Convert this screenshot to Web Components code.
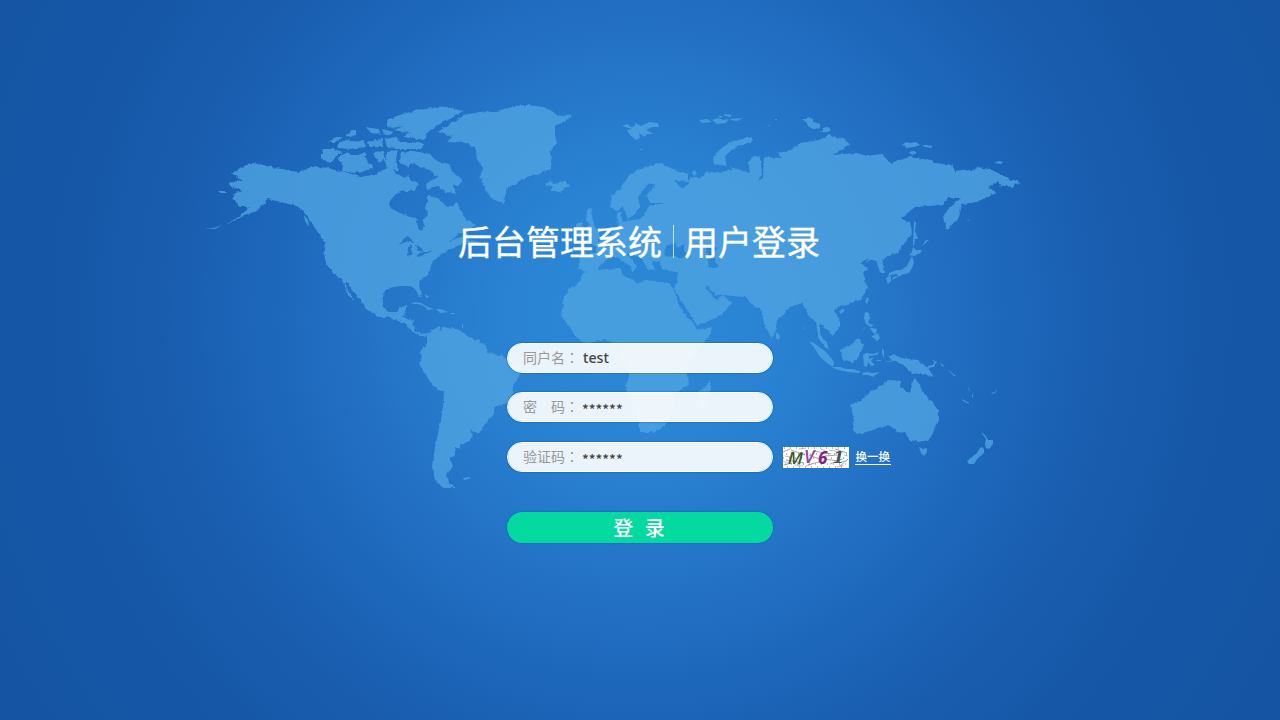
<!DOCTYPE html>
<html lang="zh-CN">
<head>
<meta charset="utf-8">
<title>后台管理系统 - 用户登录</title>
<style>
html,body{margin:0;height:100%;overflow:hidden}
body{font-family:"Noto Sans CJK SC",sans-serif}
</style>
</head>
<body>
<login-page></login-page>
<script>
function define(name, html){
  customElements.define(name, class extends HTMLElement{
    constructor(){
      super();
      const root=this.attachShadow({mode:'open'});
      const t=document.createElement('template');
      t.innerHTML=html;
      root.append(t.content.cloneNode(true));
    }
  });
}

define('world-map', `
<style>:host{display:block;width:1280px;height:720px}svg{display:block}path{fill:rgb(79,164,226)}</style>
<svg width="1280" height="720" viewBox="0 0 1280 720" aria-hidden="true">
<defs><filter id="coast" filterUnits="userSpaceOnUse" x="190" y="90" width="850" height="420" color-interpolation-filters="sRGB">
<feTurbulence type="fractalNoise" baseFrequency=".22" numOctaves="3" seed="4" result="n"/>
<feDisplacementMap in="SourceGraphic" in2="n" scale="3.8" xChannelSelector="R" yChannelSelector="G"/></filter></defs>
<g opacity=".8">
<g filter="url(#coast)">
<!-- North America -->
<path fill-rule="evenodd" d="M253 163L262 165 275 168 290 170 299 172 305 169 316 166 320 168 326 167 334 170 345 172 360 177 372 175 380 172 387 168 397 173 403 178 408 176 413 183 417 189 410 191 400 191 395 195 389 202 390 208 400 213 410 217 416 218 418 227 422 230 424 227 423 220 428 215 425 207 429 195 438 198 447 207 452 207 457 203 462 212 467 220 476 225 467 231 457 235 448 242 457 238 468 233 466 239 480 242 470 247 465 243 457 246 447 250 442 253 437 258 432 263 430 270 428 275 420 280 419 286 422 295 419 296 415 288 410 286 400 286 393 287 385 290 383 297 383 305 388 312 397 312 400 307 407 306 403 317 413 320 414 330 420 334 428 333 426 337 418 335 410 330 405 323 395 320 390 317 380 317 367 310 363 303 353 292 347 282 345 282 348 290 356 302 350 297 342 280 333 273 326 263 324 253 325 242 320 235 310 221 307 215 300 208 293 205 285 203 273 200 267 199 262 207 253 212 240 218 225 225 240 216 250 207 240 207 232 198 235 193 243 191 228 185 233 182 242 180 231 173 240 168 247 164Z
M398 243L408 236 414 243 407 242ZM408 246L412 245 411 255 407 256ZM415 245L422 247 422 252 417 250ZM416 255L424 252 432 250 428 253 419 257Z"/>
<!-- Arctic archipelago -->
<path d="M463 111L447 107 423 109 402 114 387 120 387 125 392 128 404 126 394 130 410 133 403 137 425 140 428 132 437 125 452 118Z"/>
<path d="M392 140L400 142 412 142 424 144 423 149 395 149ZM401 153L413 151 430 154 436 161 448 164 453 172 463 180 459 186 453 184 457 194 447 192 437 186 427 189 426 184 438 177 430 170 420 167 412 163 408 168 400 162Z"/>
<path d="M323 149L333 149 343 152 335 157 330 163 321 159ZM337 158L347 152 352 155 358 155 365 152 367 162 374 168 363 171 353 173 342 171 343 165ZM338 143L347 140 355 142 364 140 366 147 350 149 338 148ZM328 142L335 137 343 137 334 143ZM346 134L356 129 356 135 348 137ZM366 127L378 129 381 135 370 132ZM382 129L394 132 386 135ZM367 142L382 139 383 147 371 147ZM373 152L384 151 385 160 378 162ZM387 152L398 150 396 158 398 170 390 171 385 162ZM385 139L397 137 400 147 387 148ZM410 180L418 184 415 191 407 189Z"/>
<!-- Greenland, Iceland -->
<path d="M438 132L463 115 480 112 497 111 513 106 527 105 543 107 552 111 557 116 574 115 563 122 555 127 555 135 557 143 550 152 552 168 542 172 527 177 517 183 508 187 503 204 493 199 485 190 480 177 483 168 477 160 476 150 468 143 447 142 452 137ZM545 185L550 181 553 183 565 181 569 186 560 192 550 190 553 186Z"/>
<!-- South America -->
<path d="M427 335L432 330 440 326 441 331 443 327 460 330 465 335 477 340 485 345 487 353 500 355 510 360 521 366 520 374 513 387 512 395 507 403 495 407 492 415 483 428 478 433 470 430 473 438 467 443 460 444 461 448 455 448 455 455 450 459 453 466 447 475 449 483 456 488 443 488 435 480 432 467 434 453 437 437 441 420 443 407 444 393 432 385 425 373 419 364 422 357 420 352 427 343Z"/>
<!-- Africa -->
<path d="M583 273L590 271 607 269 620 268 623 275 628 278 640 284 644 280 655 281 668 284 673 288 678 302 684 313 695 326 697 330 712 327 710 335 700 348 692 357 687 367 689 385 675 393 673 412 667 423 655 432 640 432 638 423 635 410 627 393 626 385 629 377 628 367 620 357 618 348 612 342 605 340 587 343 578 340 570 328 562 317 563 300 568 290 577 285ZM710 380L710 392 705 408 697 409 697 392 705 387Z"/>
<!-- Europe and Asia -->
<path fill-rule="evenodd" d="M578 268L581 253 597 253 595 246 590 243 603 240 612 233 618 227 617 213 622 211 621 222 640 219 647 210 648 206 665 203 650 203 646 196 656 184 647 185 638 197 640 205 635 214 628 219 623 207 617 211 610 206 611 197 620 188 630 175 647 166 662 163 670 168 688 175 688 182 674 180 682 189 688 185 691 176 700 178 710 173 733 170 730 167 750 173 748 162 755 156 760 157 762 174 757 181 763 178 764 157 782 158 778 153 790 150 800 143 820 140 828 135 847 140 850 145 833 155 857 153 867 156 882 154 890 163 893 162 910 157 930 160 935 163 952 165 955 171 970 169 975 171 977 167 990 169 1010 179 1020 182 1013 187 998 185 998 181 988 187 996 193 977 202 962 204 959 217 947 230 943 218 947 210 961 198 948 198 942 205 915 207 900 219 910 222 912 233 898 252 887 257 882 260 885 273 880 273 877 263 874 260 867 262 868 258 860 263 868 268 863 273 868 288 860 300 840 307 834 310 840 322 840 328 832 335 820 323 820 334 827 343 829 350 822 343 818 336 816 321 810 318 802 303 790 307 777 320 775 335 771 337 765 325 760 308 754 307 745 297 723 295 715 295 707 285 705 288 717 300 723 295 732 303 722 315 697 326 687 310 674 288 678 282 677 272 662 270 660 262 652 261 655 270 648 269 642 259 633 254 627 254 637 266 632 272 631 266 618 258 610 256 604 262 597 270 586 272Z
M664 256L666 245 675 244 677 248 685 243 684 249 688 258 676 257ZM706 247L717 247 713 254 718 268 709 268Z"/>
<path d="M587 210L593 207 591 216 595 227 600 235 597 242 583 243 589 236 585 229 590 225 586 220ZM576 224L583 221 583 234 576 235Z"/>
<path d="M752 137L751 142 737 147 727 154 724 160 727 166 715 164 712 160 721 148 733 141Z"/>
<!-- Australia, Borneo, New Guinea -->
<path d="M850 405L863 399 870 392 882 385 888 380 901 381 900 387 910 393 914 377 920 385 923 393 932 402 938 410 938 420 932 435 928 440 920 442 910 440 905 433 898 432 893 426 880 427 870 431 857 434 853 430 854 420ZM840 350L852 345 858 338 864 345 858 358 853 362 843 360ZM888 357L895 354 901 358 917 360 927 367 934 377 920 373 912 374 904 365 893 361Z"/>
</g>
<!-- Small islands -->
<path d="M204 229l10-1 8-3-7 4zM218 191l6 0 3 2-6 0zM304 215l4 5 1 7-4-6zM316 226l10 11-7-4z"/>
<path d="M411 304L415 302 421 303 428 307 434 309 428 310 424 306 418 304ZM436 309L441 309 448 312 440 313ZM451 313h4v1h-4zM425 294l4 3-3 1zM463 478l8-1-2 2-5 1zM462 324l1 0 0 4-1 0z"/>
<path d="M622 126L627 124 631 127 635 126 635 123 641 126 649 122 658 123 659 127 652 127 646 130 654 134 647 134 645 137 639 133 640 138 636 140 630 135 627 130 632 129ZM699 120l8-1 5 3-10 1zM712 120l6-2 5 2 6-1-3 4-9 1zM724 114l8 1-2 2-5-1zM730 119l13-1-6 3-6-1zM718 116l5 0-3 2zM767 125l4 0-3 1zM775 119l2 0 0 1-2 0zM802 119L806 119 808 117 813 119 813 122 820 124 820 128 813 129 808 126 807 123ZM819 132L823 131 823 128 828 127 831 130 828 132ZM902 145L906 142 910 143 916 142 920 145 914 147 905 148 906 146ZM922 145l4 0 6 1 0 2-7-1zM909 152l5-1 3 2-5 2zM994 163L999 161 1003 162 1001 164ZM704 174l4-3 2 4-4 2zM692 172l3-2 2 4-3 2zM770 160l8 0 5 3 1 4-3-4-5-1zM640 149h2v1h-2z"/>
<path d="M914 221L916 223 915 231 918 239 915 239 914 246 913 245ZM913 247L916 250 922 250 920 253 914 256 909 255 912 252ZM912 256L914 262 912 268 909 273 901 275 898 277 897 274 891 275 888 277 889 273 897 270 901 270 907 266 909 262ZM886 278L891 276 891 281 888 284ZM893 277l5-1-2 2-4 2zM867 297L869 299 867 304 865 302ZM839 311l4-2 2 1-4 4zM777 332L780 336 779 340 776 339 776 335ZM804 324l1 6-1-1z"/>
<path d="M809 341L814 343 822 349 826 352 831 358 834 362 833 367 827 363 820 357 815 349ZM832 367L840 367 846 369 853 369 861 372 858 373 848 372 835 369ZM862 373l5-1 5 1 8-1-3 2-4 3-5-2-5 0zM863 355L866 353 873 354 879 352 877 355 869 356 869 359 874 357 871 361 875 365 871 366 868 362 867 367 864 366ZM865 312L869 313 870 318 868 323 874 325 871 327 866 324 864 318ZM870 328l3 0 4 1-1 5-3-1zM871 337L874 335 878 333 880 338 877 341 874 338ZM866 326l-6 8 4-6zM882 348l2 3 0 7-2-4zM877 360l4 0 0 1-4 0zM884 361l7 0 0 1zM928 366l5-1 2-4 1 1-2 5-6 1zM931 359l6 3-1 1zM940 362l5 5-3-1zM947 369l9 7-2 0zM968 386l2 5-1 0zM972 391l1 6-1 0zM962 399l7 4 0 1-6-3zM991 393l4-1 2-3-1 3-3 2zM929 240l-7 6 4-6zM942 234l-5 3zM966 218l4 3-1 0z"/>
<path d="M919 447L923 449 927 448 927 452 924 456 921 453ZM981 432L985 435 988 440 993 440 993 444 989 449 986 448 985 444 986 439ZM982 447L984 449 984 453 977 459 974 464 969 464 967 461 972 457 977 453 980 448Z"/>
</g></svg>`);

define('login-title', `
<style>:host{display:flex;align-items:center;width:362px;height:50px;color:#fff;font-size:34px;line-height:50px;white-space:nowrap;-webkit-text-stroke:.35px #fff}
i{width:1px;height:33px;background:rgba(255,255,255,.7);margin:1px 10px 0 11px}</style>
<slot name="system"></slot><i></i><slot name="action"></slot>`);

define('login-field', `
<style>:host{display:flex;align-items:center;box-sizing:border-box;width:266px;height:30px;border-radius:15px;border:1px solid #fff;background:rgba(255,255,255,.91);background-clip:padding-box;box-shadow:0 0 1px .5px rgba(0,88,190,.6);padding-left:15px;font-size:14px;white-space:nowrap}
.label{display:flex;width:60px;height:28px;line-height:26px;color:#999;white-space:pre}
.colon{font-family:"Noto Sans CJK TC",sans-serif}
.value{display:block;height:28px;color:#444;font:500 14.2px/27px "Noto Sans",sans-serif}
:host([masked]) .value{font:500 14px/33px "Noto Sans CJK SC",sans-serif;margin-left:-1px}</style>
<span class="label"><slot name="label"></slot><span class="colon" lang="zh-TW">：</span></span><span class="value"><slot></slot></span>`);

define('captcha-code', `
<style>:host{display:block;width:66px;height:21px}svg{display:block;background:#fff;overflow:visible}text{font:italic 600 17px "Open Sans",sans-serif}</style>
<svg width="66" height="21" viewBox="0 0 66 21">
<g fill="none" stroke-width=".7" opacity=".75"><path stroke="#555" d="M0 5l7-3M3 13l18 3M8 3l14 5M25 18l14-4M31 4l17 3M42 9l12-1M42 12l13 2M47 17l12-5M52 2l12 4M1 18l8-2M57 19l8-7M26 8l13 5"/><path stroke="#b66" d="M2 9l6 1M16 2l7-1M23 19l6-2M54 20l7-2M61 8l4 1"/><path stroke="#699" d="M0 14l5 2M11 18l9 1M38 2l6 3M46 3l14 3M58 15l6-1"/></g>
<path stroke="#876" fill="none" stroke-dasharray="1 5" d="M1 1H65M3 7H65M0 11H66M2 17H65M4 20H63"/>
<text x="5" y="17" fill="#3b5528" transform="rotate(3 10 12)">M</text><text x="21" y="16" fill="#8b45a5" style="font-size:18px">V</text><text x="35" y="17" fill="#851b8b" style="font-weight:700">6</text><text x="50" y="16" fill="#405657" style="font-family:'DejaVu Serif',serif;font-size:16px">1</text></svg>`);

define('refresh-link', `
<style>:host{display:block;width:36px;height:17px;color:#fff;border-bottom:1px solid #fff;font-size:11.5px;font-weight:500;line-height:16px;white-space:nowrap;box-sizing:border-box;text-indent:.5px}</style><slot></slot>`);

define('login-button', `
<style>:host{display:block}button{display:block;width:266px;height:31px;border:0;border-radius:16px;background:#04d9a0;box-shadow:0 0 1px .5px rgba(0,95,185,.5);padding:0 2px 0 0;color:#fff;font:500 20px/31px "Noto Sans CJK SC",sans-serif;word-spacing:7px}</style>
<button type="button"><slot></slot></button>`);

define('login-page', `
<style>:host{display:grid;width:1280px;height:720px;background:radial-gradient(circle at 640px 315px,#2b88d7 0,#2a84d3 130px,#2371c5 280px,#1c65b8 390px,#195cae 480px,#1657a7 580px,#1454a3 720px)}
world-map,main{grid-area:1/1}
main{display:flex;flex-direction:column;align-items:center}
login-title{margin:216px 2px 0 0}
form{display:flex;flex-direction:column;gap:19.3px;width:266px;margin-top:77px}
.row{display:flex;align-items:center;width:390px;height:30px}
captcha-code{margin:1px 0 0 10px}refresh-link{margin:0 0 0 6px}
login-button{margin-top:20.9px}</style>
<world-map></world-map>
<main>
<login-title><span slot="system">后台管理系统</span><span slot="action">用户登录</span></login-title>
<form>
<login-field><span slot="label">同户名</span>test</login-field>
<login-field masked><span slot="label">密　码</span>******</login-field>
<div class="row"><login-field masked><span slot="label">验证码</span>******</login-field><captcha-code></captcha-code><refresh-link>换一换</refresh-link></div>
<login-button>登 录</login-button>
</form>
</main>`);
</script>
</body>
</html>
